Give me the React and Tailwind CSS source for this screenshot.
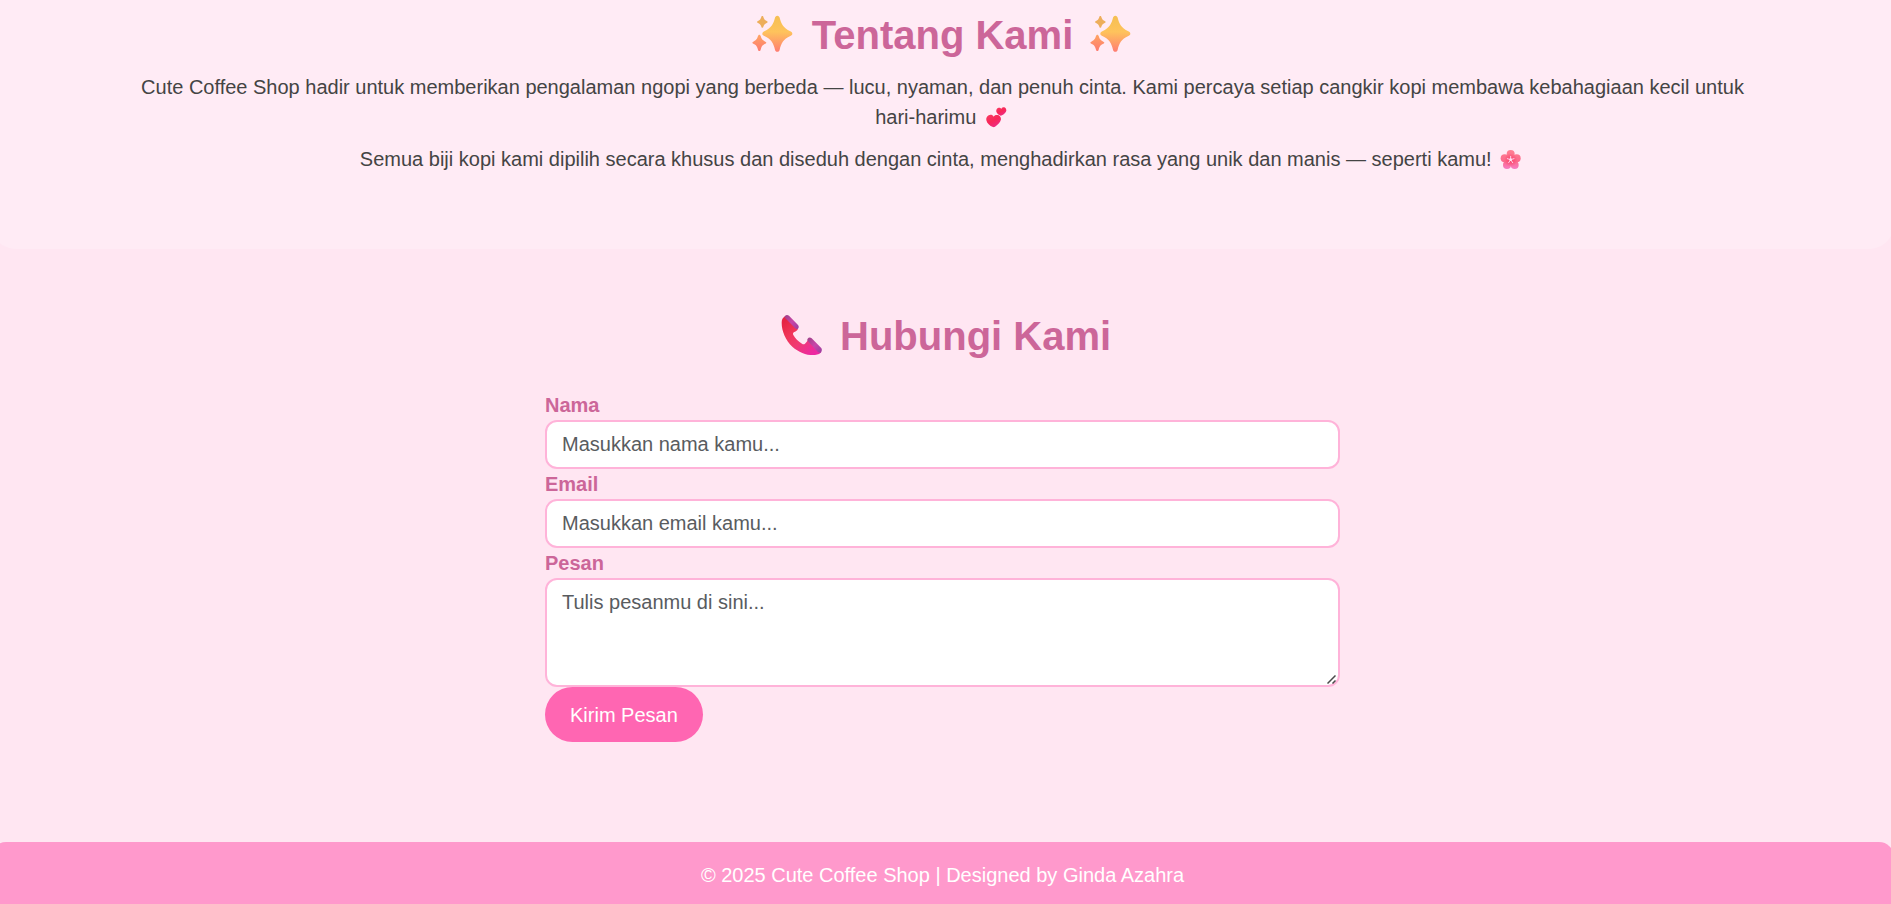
import React from "react";

function Sparkles() {
  return (
    <svg role="img" aria-label="sparkles" viewBox="20 45 165 120" className="inline-block h-10 w-[55px] overflow-visible align-[-5px]">
      <defs>
        <linearGradient id="spark" gradientUnits="userSpaceOnUse" x1="0" y1="50" x2="0" y2="158">
          <stop offset="0" stopColor="#f5bf52" />
          <stop offset="0.45" stopColor="#fec35c" />
          <stop offset="1" stopColor="#ff7d72" />
        </linearGradient>
        <linearGradient id="sparkSmall" x1="0" y1="0" x2="0" y2="1">
          <stop offset="0" stopColor="#ffa463" />
          <stop offset="1" stopColor="#fd7a70" />
        </linearGradient>
      </defs>
      <path fill="url(#spark)" d="M114 50c4 0 6 3 7 6 5 19 10 29 32 41 4 2 6 4 6 7s-2 5-6 7c-21 10-27 21-32 41-1 4-3 6-7 6s-6-2-7-6c-5-20-11-31-32-41-4-2-6-4-6-7s2-5 6-7c22-12 27-22 32-41 1-3 3-6 7-6z" />
      <path fill="#edae5b" d="M69 51c2 0 3 2 3 3 2 6 4 9 10 12 2 1 3 2 3 3s-1 2-3 3c-6 3-8 5-10 11 0 2-1 3-3 3s-3-1-3-3c-2-6-4-8-10-11-2-1-3-2-3-3s1-2 3-3c6-3 8-6 10-12 0-1 1-3 3-3z" />
      <path fill="url(#sparkSmall)" d="M60 107c2 0 3 2 4 4 3 9 5 12 14 17 2 1 3 2 3 3s-1 2-3 3c-9 4-11 8-14 18-1 3-2 4-4 4s-3-1-4-4c-3-10-5-14-14-18-2-1-3-2-3-3s1-2 3-3c9-5 11-8 14-17 1-2 2-4 4-4z" />
    </svg>
  );
}

function Phone() {
  return (
    <svg role="img" aria-label="telephone" viewBox="43 45 165 120" className="inline-block h-10 w-[55px] overflow-visible align-[-5px]">
      <defs>
        <linearGradient id="handset" gradientUnits="userSpaceOnUse" x1="80" y1="60" x2="165" y2="155">
          <stop offset="0" stopColor="#e62544" />
          <stop offset="0.3" stopColor="#f03558" />
          <stop offset="0.6" stopColor="#f03a72" />
          <stop offset="1" stopColor="#ec28a2" />
        </linearGradient>
        <linearGradient id="cup" x1="0" y1="0" x2="1" y2="1">
          <stop offset="0" stopColor="#9d4088" />
          <stop offset="0.5" stopColor="#c846a8" />
          <stop offset="1" stopColor="#9a3f9f" />
        </linearGradient>
      </defs>
      <path fill="url(#handset)" d="M76 49c-7 4-10 10-10 19 0 25 12 53 32 72 20 18 46 27 68 25 10-1 16-4 19-9l-38-39c-4 5-6 10-11 14-3 2-6 2-9 0-12-7-20-15-26-26-2-4-1-7 3-9 5-2 9-5 11-10z" />
      <path fill="url(#cup)" d="M76 48c3-4 8-4 12-1l27 28c3 4 3 8 0 11-3 2-6 1-9-2L77 55c-2-2-3-5-1-7z" />
      <path fill="url(#cup)" d="M144 116c3-4 8-4 12-1l28 28c4 4 3 10 0 14-3 3-7 1-10-2l-29-31c-2-3-3-5-1-8z" />
    </svg>
  );
}

function Hearts() {
  return (
    <svg role="img" aria-label="two hearts" viewBox="424 138 84 63" className="inline-block h-[21px] w-7 overflow-visible align-[-4px]">
      <defs>
        <linearGradient id="heart" x1="0" y1="0" x2="0.6" y2="1">
          <stop offset="0" stopColor="#f83b62" />
          <stop offset="0.55" stopColor="#f82658" />
          <stop offset="1" stopColor="#ee2b84" />
        </linearGradient>
      </defs>
      <path fill="url(#heart)" d="M459 167c-3-6-10-7-15-4-6 3-8 9-7 15 2 9 10 17 20 20 2 1 4 0 6-1 9-6 17-14 18-22 0-7-4-12-9-13-6-1-11 0-13 5z" />
      <path fill="url(#heart)" stroke="#ffebf5" strokeWidth="2" paintOrder="stroke" d="M482 144c-2-4-7-5-10-3-4 2-6 6-5 11 2 5 7 10 13 12 2 0 3 0 4-1 6-3 12-9 13-14 0-5-2-9-6-10-4 0-8 1-9 5z" />
    </svg>
  );
}

function Blossom() {
  return (
    <svg role="img" aria-label="cherry blossom" viewBox="112 267 84 63" className="inline-block h-[21px] w-7 overflow-visible align-[-4px]">
      <defs>
        <linearGradient id="petal" gradientUnits="userSpaceOnUse" x1="0" y1="270" x2="0" y2="327">
          <stop offset="0" stopColor="#ff8092" />
          <stop offset="0.6" stopColor="#fb6a8c" />
          <stop offset="1" stopColor="#f77cc4" />
        </linearGradient>
        <radialGradient id="core">
          <stop offset="0" stopColor="#fb4069" />
          <stop offset="1" stopColor="#fb4069" stopOpacity="0" />
        </radialGradient>
      </defs>
      <g fill="url(#petal)">
        <circle cx="153" cy="282" r="12" />
        <circle cx="135" cy="295" r="12" />
        <circle cx="171" cy="295" r="12" />
        <circle cx="142" cy="315" r="12" />
        <circle cx="165" cy="315" r="12" />
        <circle cx="153" cy="300" r="13" />
      </g>
      <circle cx="153" cy="300" r="20" fill="url(#core)" />
      <path d="M153 299V289M153 299L143 296M153 299L163 296M153 299L147 308M153 299L159 308" stroke="#ffd2ea" strokeWidth="3" strokeLinecap="round" />
      <circle cx="153" cy="299" r="4" fill="#ffe3f4" />
    </svg>
  );
}

const fieldClass =
  "block w-full rounded-xl border-2 border-[#ffb3d9] bg-white px-[15px] text-xl leading-[30px] text-[#444] outline-none placeholder:text-[#595c5f]";
const labelClass = "block text-xl leading-[30px] font-bold text-[#cc6699]";
const headingClass = "text-center text-[40px] leading-[48px] font-bold text-[#cc6699]";

export default function App() {
  return (
    <div className="overflow-x-hidden bg-[#ffe6f2] font-['Liberation_Sans',Arial,sans-serif] text-xl leading-[30px] text-[#444]">
      <div className="-mr-[3px] -ml-[9px]">
        <section className="rounded-b-[25px] bg-[#ffebf5] pt-[11px] pb-[75px] text-center">
          <div className="mx-auto max-w-[1650px] px-[15px]">
            <h2 className={headingClass}>
              <Sparkles /> Tentang Kami <Sparkles />
            </h2>
            <p className="mt-[13px]">
              Cute Coffee Shop hadir untuk memberikan pengalaman ngopi yang berbeda — lucu, nyaman, dan penuh cinta. Kami
              percaya setiap cangkir kopi membawa kebahagiaan kecil untuk hari-harimu <Hearts />
            </p>
            <p className="mt-3">
              Semua biji kopi kami dipilih secara khusus dan diseduh dengan cinta, menghadirkan rasa yang unik dan manis —
              seperti kamu! <Blossom />
            </p>
          </div>
        </section>

        <section className="pt-[63px] pb-[100px]">
          <h2 className={headingClass}>
            <Phone /> Hubungi Kami
          </h2>
          <form className="mx-auto mt-[30px] max-w-[795px]" onSubmit={(e) => e.preventDefault()}>
            <label htmlFor="nama" className={labelClass}>Nama</label>
            <input id="nama" type="text" placeholder="Masukkan nama kamu..." className={`${fieldClass} h-[49px]`} />
            <label htmlFor="email" className={labelClass}>Email</label>
            <input id="email" type="email" placeholder="Masukkan email kamu..." className={`${fieldClass} h-[49px]`} />
            <label htmlFor="pesan" className={labelClass}>Pesan</label>
            <div className="relative">
              <textarea
                id="pesan"
                rows={3}
                placeholder="Tulis pesanmu di sini..."
                className={`${fieldClass} resize-y pt-[7px] pb-2 [&::-webkit-resizer]:bg-transparent`}
              />
              <svg aria-hidden="true" viewBox="0 0 9 9" className="pointer-events-none absolute right-1 bottom-[3px] size-[9px]">
                <path d="M.5 8.5l8-8M5.5 8.5l3-3" fill="none" stroke="#4a4a4a" strokeWidth="1.5" />
              </svg>
            </div>
            <button type="submit" className="block h-[55px] rounded-full bg-[#ff66b2] px-[25px] text-white">
              Kirim Pesan
            </button>
          </form>
        </section>

        <footer className="rounded-t-[15px] bg-[#ff99cc] pt-[18px] pb-[14px] text-center text-white">
          <p>© 2025 Cute Coffee Shop | Designed by Ginda Azahra</p>
        </footer>
      </div>
    </div>
  );
}
